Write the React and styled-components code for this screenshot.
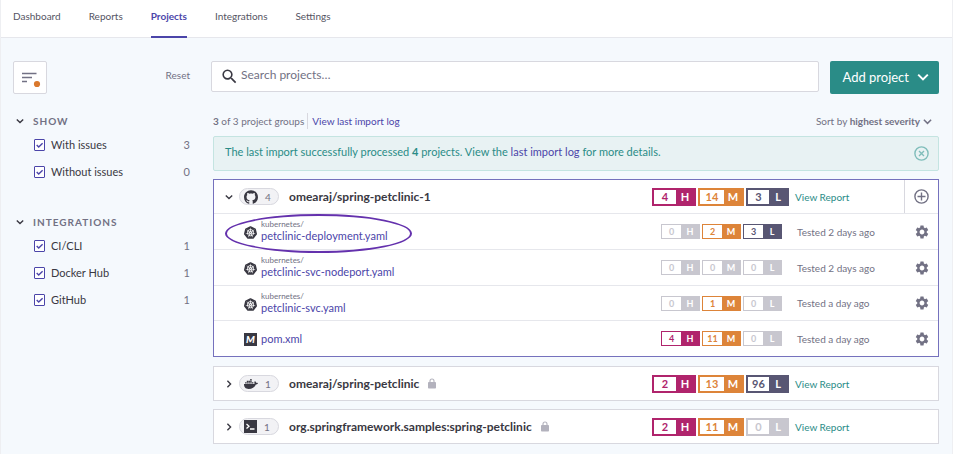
import React from "react";
import styled, { createGlobalStyle, css } from "styled-components";
import { FaDocker } from "react-icons/fa";
import { SiGithub, SiKubernetes } from "react-icons/si";
import { MdSettings, MdSearch } from "react-icons/md";

const color = {
  page: "#f5f9fd",
  line: "#d8d8df",
  faint: "#e6e7ec",
  text: "#393842",
  muted: "#727184",
  link: "#4b45a9",
  teal: "#2a8c87",
  H: "#b0246c",
  M: "#dd8439",
  L: "#585673",
  none: "#c8c7cf",
};

const badgeWidth = { H: 44, M: 46, L: 43 };

const GlobalStyle = createGlobalStyle`
  *, *::before, *::after { box-sizing: border-box; }
  body {
    margin: 0;
    background: ${color.page};
    color: ${color.text};
    font-family: Lato, "Open Sans", sans-serif;
    font-size: 11px;
    line-height: 16px;
  }
  button, input { font: inherit; color: inherit; }
  button { cursor: pointer; padding: 0; border: 0; background: none; }
  a { text-decoration: none; color: ${color.link}; }
  svg { display: block; flex: none; }
`;

const Page = styled.div`
  min-height: 100vh;
  border-left: 1px solid #eeeff2;
  border-right: 1px solid #eeeff2;
`;

const Nav = styled.nav`
  display: flex;
  gap: 28px;
  height: 38px;
  padding-left: 12px;
  background: #fff;
  border-bottom: 1px solid ${color.faint};
`;

const NavLink = styled.a`
  height: 38px;
  padding-top: 8px;
  font-size: 10px;
  color: #555463;
  ${(p) =>
    p.$active &&
    css`
      color: ${color.link};
      font-weight: 700;
      border-bottom: 2px solid ${color.link};
    `}
`;

const Columns = styled.div`
  display: grid;
  grid-template-columns: 177px minmax(0, 1fr);
  gap: 21px;
  padding: 23px 13px 1px 12px;
`;

const SidebarTop = styled.div`
  display: flex;
  justify-content: space-between;
  align-items: flex-start;
  margin-bottom: 18px;
`;

const FilterButton = styled.button`
  width: 34px;
  height: 33px;
  padding: 5px;
  background: #fff;
  border: 1px solid ${color.line};
  border-radius: 2px;
`;

const ResetButton = styled.button`
  margin-top: 6px;
  font-size: 10px;
  color: ${color.muted};
`;

const FilterGroup = styled.section`
  margin-bottom: 28px;
`;

const GroupToggle = styled.button`
  display: flex;
  align-items: center;
  gap: 9px;
  padding-left: 3px;
  height: 18px;
  font-size: 10px;
  font-weight: 700;
  letter-spacing: 1px;
  color: ${color.muted};
  svg { color: ${color.text}; }
`;

const FilterList = styled.ul`
  list-style: none;
  margin: 1px 0 0;
  padding: 0;
`;

const FilterItem = styled.li`
  display: flex;
  justify-content: space-between;
  align-items: center;
  height: 27px;
  padding-left: 21px;
  color: ${color.muted};
`;

const FilterLabel = styled.label`
  display: flex;
  align-items: center;
  gap: 6px;
  color: ${color.text};
`;

const CheckWrap = styled.span`
  display: grid;
  > * { grid-area: 1 / 1; }
  svg { pointer-events: none; color: ${color.link}; }
`;

const Checkbox = styled.input`
  appearance: none;
  width: 11px;
  height: 12px;
  margin: 0;
  background: #fff;
  border: 1px solid ${color.link};
  border-radius: 1px;
  &:not(:checked) + svg { visibility: hidden; }
`;

const Toolbar = styled.div`
  display: flex;
  align-items: flex-start;
  gap: 11px;
`;

const SearchBox = styled.label`
  flex: 1;
  display: flex;
  align-items: center;
  gap: 2px;
  height: 31px;
  padding-left: 8px;
  background: #fff;
  border: 1px solid ${color.line};
  border-radius: 2px;
`;

const SearchInput = styled.input`
  flex: 1;
  min-width: 0;
  padding: 0 0 3px;
  border: 0;
  outline: 0;
  background: none;
  font-size: 12px;
  &::placeholder { color: ${color.muted}; opacity: 1; }
`;

const AddButton = styled.button`
  display: flex;
  align-items: center;
  gap: 8px;
  height: 33px;
  padding: 0 10px 2px 12px;
  font-size: 13px;
  color: #fff;
  background: ${color.teal};
  border-radius: 2px;
`;

const Results = styled.div`
  padding-left: 2px;
`;

const Summary = styled.div`
  display: flex;
  align-items: center;
  height: 20px;
  margin: 17px 0 5px;
  font-size: 10px;
  color: ${color.muted};
`;

const SummaryLink = styled.a`
  margin-left: 3px;
  padding-left: 4px;
  border-left: 1px solid ${color.line};
`;

const SortButton = styled.button`
  display: flex;
  align-items: center;
  gap: 3px;
  margin-left: auto;
  padding-right: 7px;
  color: ${color.muted};
`;

const Alert = styled.div`
  display: flex;
  justify-content: space-between;
  align-items: center;
  height: 35px;
  margin-bottom: 8px;
  padding: 0 9px 0 11px;
  color: ${color.teal};
  background: #e8f2f3;
  border: 1px solid #c4e4e1;
  border-radius: 2px;
`;

const AlertText = styled.p`
  margin: 0 0 3px;
`;

const CloseButton = styled.button`
  color: #7fbdba;
`;

const Card = styled.section`
  margin-bottom: ${(p) => (p.$open ? 9 : 8)}px;
  background: #fff;
  border: 1px solid ${(p) => (p.$open ? "#7571bd" : color.line)};
`;

const CardHeader = styled.header`
  display: flex;
  align-items: center;
  height: 33px;
  padding-left: 11px;
`;

const ExpandButton = styled.button`
  width: 14px;
  display: flex;
  align-items: center;
`;

const SourcePill = styled.span`
  display: flex;
  align-items: center;
  gap: 7px;
  width: 40px;
  height: 17px;
  padding-left: 4px;
  color: ${color.muted};
  font-size: 10px;
  background: #f2f2f5;
  border: 1px solid ${color.line};
  border-radius: 9px;
  svg { color: ${color.text}; }
`;

const CardTitle = styled.h2`
  display: flex;
  align-items: center;
  gap: 9px;
  margin: 0 auto 0 10px;
  font-size: 12px;
  line-height: 16px;
  font-weight: 700;
  svg { color: #b3b2bd; }
`;

const HeaderBadges = styled.div`
  display: flex;
  gap: 2px;
`;

const ReportCell = styled.div`
  width: 115px;
  padding-left: 6px;
  font-size: 10px;
  a { color: ${color.teal}; }
`;

const ActionCell = styled.div`
  display: grid;
  place-items: center;
  align-self: stretch;
  width: 34px;
  border-left: 1px solid ${(p) => (p.$divided ? color.line : "transparent")};
  color: ${color.muted};
`;

const BadgeBox = styled.span`
  display: inline-flex;
  width: ${(p) => (p.$small ? 39 : badgeWidth[p.$level])}px;
  height: ${(p) => (p.$small ? 15 : 18)}px;
  line-height: ${(p) => (p.$small ? 13 : 14)}px;
  font-size: ${(p) => (p.$small ? 9 : 11)}px;
  font-weight: 700;
  text-align: center;
  color: ${(p) => color[p.$tone]};
  background: ${(p) => color[p.$tone]};
  border: ${(p) => (p.$small ? 1 : 2)}px solid ${(p) => color[p.$tone]};
`;

const BadgeCount = styled.span`
  flex: 1;
  background: #fff;
`;

const BadgeLetter = styled.span`
  width: 18px;
  color: #fff;
`;

const FileRow = styled.div`
  position: relative;
  display: flex;
  align-items: center;
  height: ${(p) => (p.$short ? 35 : 36)}px;
  padding-left: 30px;
  border-top: 1px solid ${color.faint};
`;

const FileIcon = styled.span`
  width: 17px;
  color: ${color.text};
  padding-top: 2px;
`;

const MavenMark = styled.span`
  display: block;
  width: 13px;
  height: 13px;
  background: ${color.text};
  color: #fff;
  font-size: 10px;
  line-height: 13px;
  font-weight: 900;
  font-style: italic;
  text-align: center;
`;

const FileName = styled.div`
  display: flex;
  flex-direction: column;
  margin-right: auto;
`;

const FilePath = styled.span`
  font-size: 8px;
  line-height: 9px;
  color: ${color.muted};
`;

const FileLink = styled.a`
  font-size: 11px;
  line-height: 14px;
`;

const RowBadges = styled.div`
  display: flex;
  gap: 2px;
`;

const TestedCell = styled.div`
  width: 122px;
  padding-left: 15px;
  font-size: 10px;
  color: ${color.muted};
`;

const Highlight = styled.span`
  position: absolute;
  left: 11px;
  top: 0;
  width: 187px;
  height: 39px;
  border: 2px solid #6431ad;
  border-radius: 50%;
  pointer-events: none;
  z-index: 1;
`;

const Chevron = ({ size = 8, right = false, weight = 1.7 }) => (
  <svg width={size} height={size} viewBox="0 0 10 10" fill="none" stroke="currentColor" strokeWidth={weight} aria-hidden="true">
    <path d={right ? "M3 1l4 4-4 4" : "M1 3l4 4 4-4"} />
  </svg>
);

const LockIcon = () => (
  <svg width="8" height="11" viewBox="0 0 8 11" aria-label="Private" role="img">
    <path d="M2 5V3a2 2 0 0 1 4 0v2" fill="none" stroke="currentColor" strokeWidth="1.1" />
    <rect y="4" width="8" height="6.5" rx="0.8" fill="currentColor" />
  </svg>
);

const TerminalIcon = () => (
  <svg width="13" height="13" viewBox="0 0 13 13" aria-hidden="true">
    <rect width="13" height="13" fill="currentColor" />
    <path d="M2.5 4l2.5 2.3-2.5 2.3M6 9h4.5" fill="none" stroke="#fff" strokeWidth="1.3" />
  </svg>
);

const CircleIcon = ({ path }) => (
  <svg width="15" height="15" viewBox="0 0 15 15" fill="none" stroke="currentColor" strokeWidth="1.4" aria-hidden="true">
    <circle cx="7.5" cy="7.5" r="6.6" />
    <path d={path} />
  </svg>
);

function Badges({ counts, small }) {
  return ["H", "M", "L"].map((level, i) => (
    <BadgeBox key={level} $small={small} $level={level} $tone={counts[i] ? level : "none"}>
      <BadgeCount>{counts[i]}</BadgeCount>
      <BadgeLetter>{level}</BadgeLetter>
    </BadgeBox>
  ));
}

function FilterSection({ title, items }) {
  return (
    <FilterGroup>
      <GroupToggle>
        <Chevron />
        {title}
      </GroupToggle>
      <FilterList>
        {items.map(([label, count]) => (
          <FilterItem key={label}>
            <FilterLabel>
              <CheckWrap>
                <Checkbox type="checkbox" defaultChecked />
                <svg width="11" height="12" viewBox="0 0 11 12" fill="none" stroke="currentColor" strokeWidth="1.4">
                  <path d="M2.7 6l2 2L8.6 4.2" />
                </svg>
              </CheckWrap>
              {label}
            </FilterLabel>
            <span>{count}</span>
          </FilterItem>
        ))}
      </FilterList>
    </FilterGroup>
  );
}

function ProjectCard({ title, icon, total, counts, open, locked, children }) {
  return (
    <Card $open={open}>
      <CardHeader>
        <ExpandButton aria-label={"Toggle " + title} aria-expanded={!!open}>
          <Chevron right={!open} />
        </ExpandButton>
        <SourcePill>
          {icon}
          {total}
        </SourcePill>
        <CardTitle>
          {title}
          {locked && <LockIcon />}
        </CardTitle>
        <HeaderBadges>
          <Badges counts={counts} />
        </HeaderBadges>
        <ReportCell>
          <a href="#report">View Report</a>
        </ReportCell>
        <ActionCell $divided={open}>
          {open && (
            <button aria-label="Add to project">
              <CircleIcon path="M7.5 3.5v8M3.5 7.5h8" />
            </button>
          )}
        </ActionCell>
      </CardHeader>
      {children}
    </Card>
  );
}

const files = [
  { path: "kubernetes/", name: "petclinic-deployment.yaml", counts: [0, 2, 3], tested: "Tested 2 days ago", marked: true },
  { path: "kubernetes/", name: "petclinic-svc-nodeport.yaml", counts: [0, 0, 0], tested: "Tested 2 days ago" },
  { path: "kubernetes/", name: "petclinic-svc.yaml", counts: [0, 1, 0], tested: "Tested a day ago", short: true },
  { name: "pom.xml", counts: [4, 11, 0], tested: "Tested a day ago" },
];

export default function App() {
  return (
    <>
      <GlobalStyle />
      <Page>
        <Nav>
          {["Dashboard", "Reports", "Projects", "Integrations", "Settings"].map((item) => (
            <NavLink key={item} href={"#" + item.toLowerCase()} $active={item === "Projects"}>
              {item}
            </NavLink>
          ))}
        </Nav>
        <Columns>
          <aside>
            <SidebarTop>
              <FilterButton aria-label="Filters">
                <svg width="22" height="21" viewBox="0 0 22 21" aria-hidden="true">
                  <path d="M3 6.5h14.5M3 10.5h10M3 14.5h5" stroke={color.muted} strokeWidth="1.5" />
                  <circle cx="18" cy="17" r="3.1" fill="#d9782d" />
                </svg>
              </FilterButton>
              <ResetButton>Reset</ResetButton>
            </SidebarTop>
            <FilterSection title="SHOW" items={[["With issues", 3], ["Without issues", 0]]} />
            <FilterSection title="INTEGRATIONS" items={[["CI/CLI", 1], ["Docker Hub", 1], ["GitHub", 1]]} />
          </aside>
          <main>
            <Toolbar>
              <SearchBox>
                <MdSearch size={19} color={color.text} />
                <SearchInput type="search" placeholder="Search projects…" aria-label="Search projects" />
              </SearchBox>
              <AddButton>
                Add project
                <Chevron size={12} />
              </AddButton>
            </Toolbar>
            <Results>
              <Summary>
                <span>
                  <b>3</b> of 3 project groups
                </span>
                <SummaryLink href="#log">View last import log</SummaryLink>
                <SortButton>
                  <span>
                    Sort by <b>highest severity</b>
                  </span>
                  <Chevron size={9} />
                </SortButton>
              </Summary>
              <Alert role="status">
                <AlertText>
                  The last import successfully processed <b>4</b> projects. View the <a href="#log">last import log</a> for more details.
                </AlertText>
                <CloseButton aria-label="Dismiss">
                  <CircleIcon path="M5 5l5 5M10 5l-5 5" />
                </CloseButton>
              </Alert>
              <ProjectCard open title="omearaj/spring-petclinic-1" icon={<SiGithub size={14} />} total={4} counts={[4, 14, 3]}>
                {files.map((f) => (
                  <FileRow key={f.name} $short={f.short}>
                    {f.marked && <Highlight />}
                    <FileIcon>{f.path ? <SiKubernetes size={13} /> : <MavenMark>M</MavenMark>}</FileIcon>
                    <FileName>
                      {f.path && <FilePath>{f.path}</FilePath>}
                      <FileLink href={"#" + f.name}>{f.name}</FileLink>
                    </FileName>
                    <RowBadges>
                      <Badges small counts={f.counts} />
                    </RowBadges>
                    <TestedCell>{f.tested}</TestedCell>
                    <ActionCell>
                      <button aria-label={"Settings for " + f.name}>
                        <MdSettings size={16} />
                      </button>
                    </ActionCell>
                  </FileRow>
                ))}
              </ProjectCard>
              <ProjectCard locked title="omearaj/spring-petclinic" icon={<FaDocker size={14} />} total={1} counts={[2, 13, 96]} />
              <ProjectCard locked title="org.springframework.samples:spring-petclinic" icon={<TerminalIcon />} total={1} counts={[2, 11, 0]} />
            </Results>
          </main>
        </Columns>
      </Page>
    </>
  );
}
